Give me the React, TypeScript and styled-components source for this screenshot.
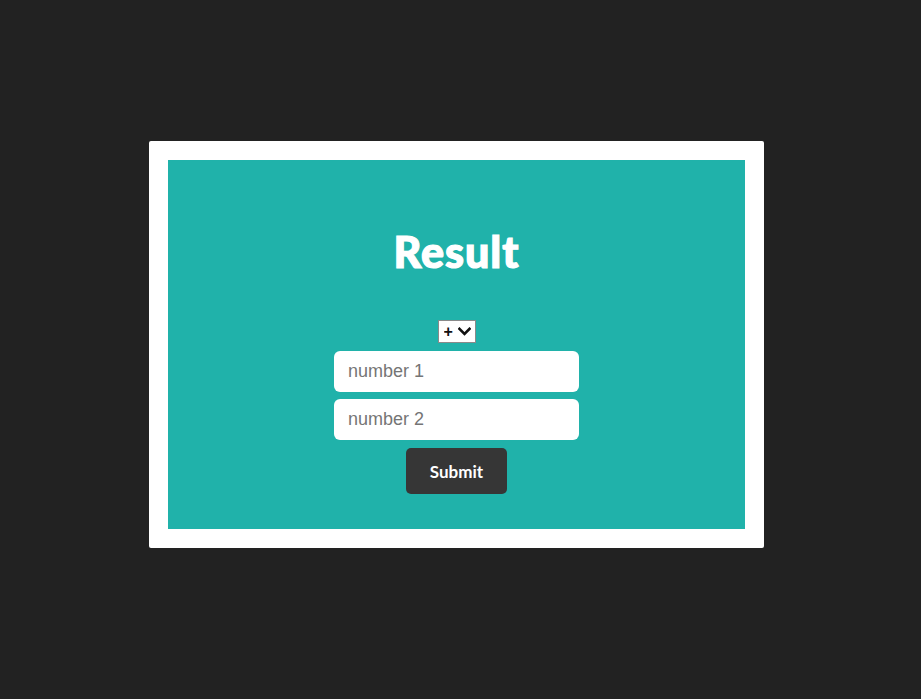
import React from "react";
import styled, { createGlobalStyle } from "styled-components";

const Global = createGlobalStyle`
  html, body { margin: 0; padding: 0; background: #222222; }
  body { font-family: "Liberation Sans", Arial, sans-serif; }
`;

const Page = styled.div`
  width: 921px;
  height: 699px;
  display: flex;
  justify-content: flex-start;
  padding: 141px 0 0 149px;
  box-sizing: border-box;
`;

const Card = styled.div`
  width: 615px;
  height: 407px;
  background: #ffffff;
  border-radius: 2px;
  padding: 19px;
  box-sizing: border-box;
`;

const Panel = styled.div`
  height: 100%;
  background: #20b2aa;
  display: flex;
  flex-direction: column;
  align-items: center;
  padding-top: 63px;
  box-sizing: border-box;
`;

const Title = styled.h1`
  margin: 0 0 40px;
  height: 57px;
  line-height: 57px;
  font-family: Lato, "Open Sans", sans-serif;
  font-weight: 900;
  font-size: 43px;
  color: #ffffff;
  letter-spacing: 1px;
  -webkit-text-stroke: 1.2px #ffffff;
`;

const SelectWrap = styled.div`
  position: relative;
  width: 38px;
  height: 23px;
  margin: 0 0 8px;
`;

const Operator = styled.select`
  appearance: none;
  -webkit-appearance: none;
  width: 38px;
  height: 23px;
  background: #ffffff;
  border: 1px solid #8a8a8a;
  border-radius: 0;
  font-family: "Liberation Sans", Arial, sans-serif;
  font-size: 16px;
  font-weight: 700;
  color: #111;
  padding: 0 0 0 5px;
  box-sizing: border-box;
`;

const Chevron = styled.svg`
  position: absolute;
  right: 5px;
  top: 7px;
  width: 13px;
  height: 9px;
  pointer-events: none;
`;

const Field = styled.input`
  width: 245px;
  height: 41px;
  box-sizing: border-box;
  border: none;
  border-radius: 6px;
  background: #ffffff;
  padding: 0 14px;
  margin: 0 0 ${(p: { $gap: number }) => p.$gap}px;
  font-family: "Liberation Sans", Arial, sans-serif;
  font-size: 18px;
  color: #333;
  outline: none;
  &::placeholder { color: #757575; }
`;

const SubmitButton = styled.button`
  width: 101px;
  height: 46px;
  border: none;
  border-radius: 5px;
  background: #363636;
  color: #ffffff;
  font-family: Lato, "Open Sans", sans-serif;
  font-weight: 700;
  font-size: 17px;
  cursor: pointer;
`;

export default function App() {
  return (
    <>
      <Global />
      <Page>
        <Card>
          <Panel>
            <Title>Result</Title>
            <SelectWrap>
              <Operator defaultValue="+">
                <option value="+">+</option>
                <option value="-">-</option>
                <option value="*">*</option>
                <option value="/">/</option>
              </Operator>
              <Chevron viewBox="0 0 13 9">
                <path d="M1.5 1.8 L6.5 6.8 L11.5 1.8" fill="none" stroke="#111" strokeWidth="2.6" strokeLinecap="square" />
              </Chevron>
            </SelectWrap>
            <Field $gap={7} type="number" placeholder="number 1" />
            <Field $gap={8} type="number" placeholder="number 2" />
            <SubmitButton>Submit</SubmitButton>
          </Panel>
        </Card>
      </Page>
    </>
  );
}
